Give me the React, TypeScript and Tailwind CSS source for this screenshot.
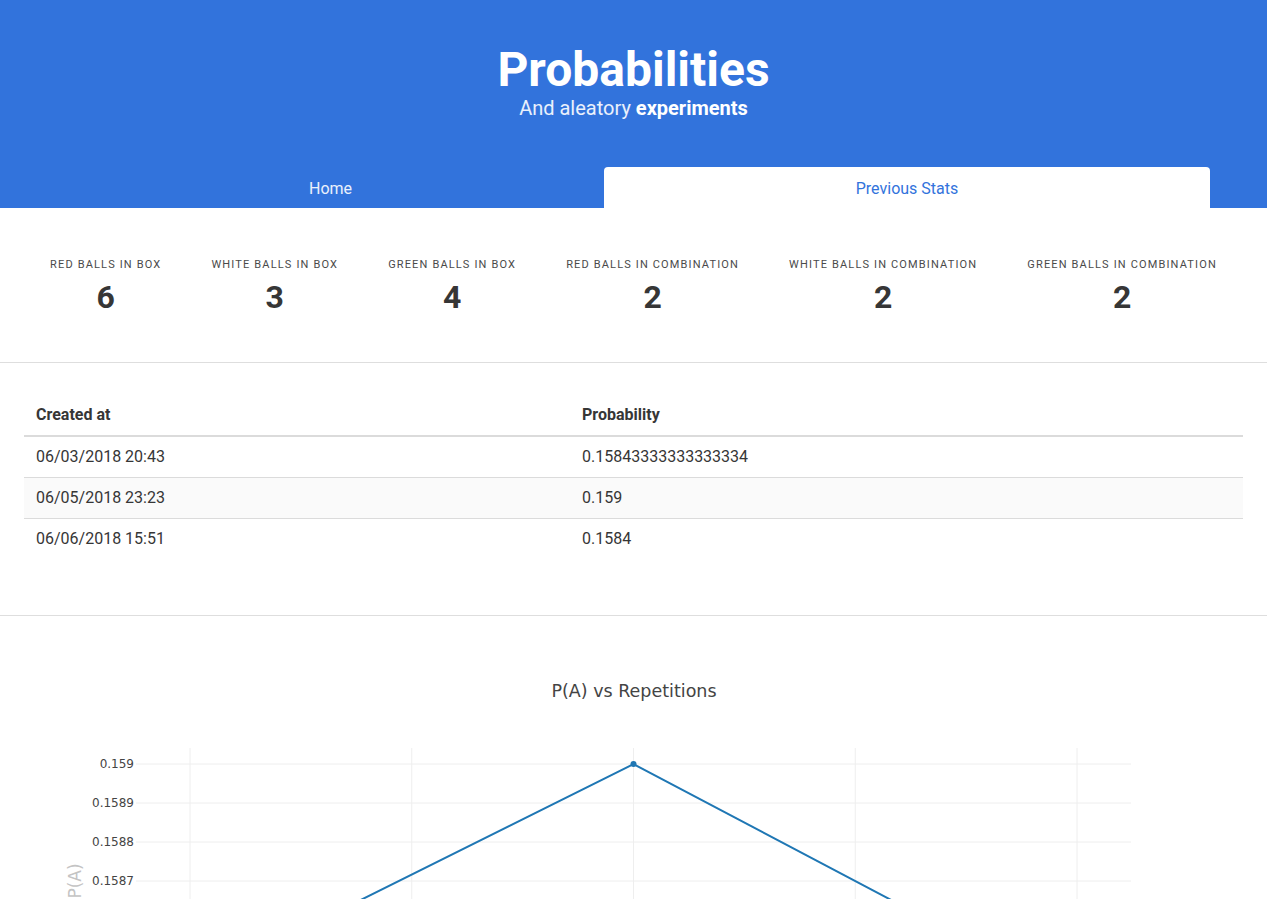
const STATS = [
  { label: "Red balls in box", value: 6 },
  { label: "White balls in box", value: 3 },
  { label: "Green balls in box", value: 4 },
  { label: "Red balls in combination", value: 2 },
  { label: "White balls in combination", value: 2 },
  { label: "Green balls in combination", value: 2 },
];

const ROWS = [
  { created: "06/03/2018 20:43", p: "0.15843333333333334" },
  { created: "06/05/2018 23:23", p: "0.159" },
  { created: "06/06/2018 15:51", p: "0.1584" },
];

// chart geometry (svg coords, top of svg = top of chart section)
const PLOT = { left: 136, right: 1131, top: 132, bottom: 398 };
const Y_TICKS = ["0.159", "0.1589", "0.1588", "0.1587", "0.1586", "0.1585", "0.1584"];
const X_GRID = [190, 411.75, 633.5, 855.25, 1077];
const POINTS: [number, number][] = [
  [190, 369],
  [633.5, 148],
  [1077, 382],
];

function Chart() {
  return (
    <svg width="1267" height="430" className="block" style={{ fontFamily: '"DejaVu Sans", Verdana, sans-serif' }}>
      <text x="634" y="81" textAnchor="middle" fontSize="17.5" fill="#444">
        P(A) vs Repetitions
      </text>

      {X_GRID.map((x) => (
        <line key={x} x1={x} x2={x} y1={PLOT.top} y2={PLOT.bottom} stroke="#eee" strokeWidth="1" />
      ))}
      {Y_TICKS.map((t, i) => {
        const y = 148 + i * 39;
        return (
          <g key={t}>
            <line x1={PLOT.left} x2={PLOT.right} y1={y} y2={y} stroke="#eee" strokeWidth="1" />
            <text x="134" y={y + 4} textAnchor="end" fontSize="12" fill="#444">
              {t}
            </text>
          </g>
        );
      })}

      <text x="0" y="0" transform="translate(81 265) rotate(-90)" textAnchor="middle" fontSize="17" fill="#c4c4c4">
        P(A)
      </text>

      <polyline
        points={POINTS.map((p) => p.join(",")).join(" ")}
        fill="none"
        stroke="#1f77b4"
        strokeWidth="2"
      />
      {POINTS.map(([x, y]) => (
        <circle key={x} cx={x} cy={y} r="3" fill="#1f77b4" />
      ))}
    </svg>
  );
}

export default function App() {
  return (
    <div className="min-h-screen bg-white font-['Roboto',sans-serif] text-[#4a4a4a]">
      {/* Hero */}
      <section className="bg-[#3273dc] pt-[43px]">
        <div className="text-center">
          <h1 className="text-[48px] font-bold leading-[54px] text-white">Probabilities</h1>
          <p className="-mt-[1px] text-[20px] leading-[25px] text-white/90">
            And aleatory <strong className="font-bold text-white">experiments</strong>
          </p>
        </div>
        <ul className="mx-auto mt-[46px] flex w-[1153px] text-[16px]">
          <li className="flex h-[41px] w-[547px] items-center justify-center pt-[2px] text-white/90">Home</li>
          <li className="flex h-[41px] w-[606px] items-center justify-center rounded-t-[4px] bg-white pt-[2px] text-[#3273dc]">
            Previous Stats
          </li>
        </ul>
      </section>

      {/* Stats */}
      <section className="flex justify-evenly border-b border-[#dedede] pt-[49px] pb-[47.5px] text-center">
        {STATS.map((s) => (
          <div key={s.label}>
            <p className="mb-[5px] text-[11px] uppercase leading-[16.5px] tracking-[1.15px] text-[#4a4a4a]">{s.label}</p>
            <p className="text-[32px] font-bold leading-[36px] text-[#363636]">{s.value}</p>
          </div>
        ))}
      </section>

      {/* Table */}
      <section className="border-b border-[#dedede] px-6 pt-[32px] pb-[56px]">
        <table className="w-full border-collapse text-left text-[16px]">
          <thead>
            <tr className="border-b-2 border-[#dbdbdb]">
              <th className="w-[546px] px-3 py-2 font-bold leading-[24px] text-[#363636]">Created at</th>
              <th className="px-3 py-2 font-bold leading-[24px] text-[#363636]">Probability</th>
            </tr>
          </thead>
          <tbody>
            {ROWS.map((r, i) => (
              <tr
                key={r.created}
                className={
                  (i % 2 === 1 ? "bg-[#fafafa] " : "") + (i < ROWS.length - 1 ? "border-b border-[#dbdbdb]" : "")
                }
              >
                <td className="px-3 py-2 leading-[24px] text-[#363636]">{r.created}</td>
                <td className="px-3 py-2 leading-[24px] text-[#363636]">{r.p}</td>
              </tr>
            ))}
          </tbody>
        </table>
      </section>

      {/* Chart */}
      <section>
        <Chart />
      </section>
    </div>
  );
}
